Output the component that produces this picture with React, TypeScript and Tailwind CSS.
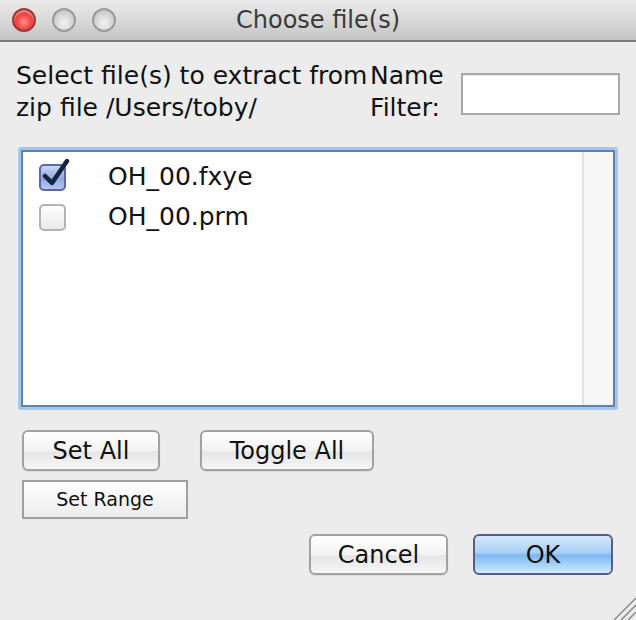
import React from "react";

const font = { fontFamily: '"DejaVu Sans", "Liberation Sans", sans-serif' };

const Light: React.FC<{ red?: boolean }> = ({ red }) => (
  <span
    className={
      red
        ? "block size-[24px] rounded-full border-2 border-[#9c3a3a] bg-[radial-gradient(circle_at_50%_60%,#ff8d8d_0%,#f24848_45%,#c01f1f_100%)] shadow-[inset_0_2px_2px_rgba(255,255,255,0.5)]"
        : "block size-[24px] rounded-full border-2 border-[#9a9a9a] bg-[radial-gradient(circle_at_50%_65%,#f4f4f4_0%,#d4d4d4_55%,#b4b4b4_100%)]"
    }
  />
);

const CheckBox: React.FC<{ checked?: boolean }> = ({ checked }) => (
  <span className="relative block size-[27px] shrink-0">
    <span
      className={
        checked
          ? "absolute inset-0 rounded-[5px] border-2 border-[#5a6aa0] bg-[linear-gradient(#c9d6f2,#8fa8e0_55%,#b4c7f0)]"
          : "absolute inset-0 rounded-[5px] border-2 border-[#b3b3b3] bg-[linear-gradient(#ffffff,#e9e9e9)]"
      }
    />
    {checked && (
      <svg
        className="absolute left-0 top-[-6px]"
        width="32"
        height="32"
        viewBox="0 0 32 32"
      >
        <path
          d="M6 18 L13 25 L28 3"
          fill="none"
          stroke="#15233d"
          strokeWidth="4.5"
          strokeLinecap="round"
          strokeLinejoin="round"
        />
      </svg>
    )}
  </span>
);

const Button: React.FC<{ label: string; className: string }> = ({
  label,
  className,
}) => (
  <button
    className={`flex items-center justify-center rounded-[6px] border-2 border-[#a2a2a2] bg-[linear-gradient(#ffffff,#f3f3f3_50%,#e6e6e6_55%,#f6f6f6)] text-[24px] text-[#111] shadow-[0_1px_1px_rgba(0,0,0,0.08)] ${className}`}
  >
    {label}
  </button>
);

export default function App() {
  const files = [
    { name: "OH_00.fxye", checked: true },
    { name: "OH_00.prm", checked: false },
  ];
  return (
    <div
      className="relative flex h-[620px] w-[636px] flex-col overflow-hidden bg-[#ececec] text-[#111]"
      style={font}
    >
      {/* title bar */}
      <div className="relative flex h-[42px] shrink-0 items-center border-b-2 border-[#7a7a7a] bg-[linear-gradient(#ebebeb,#d9d9d9_50%,#c4c4c4)]">
        <div className="flex gap-[16px] pl-[12px]">
          <Light red />
          <Light />
          <Light />
        </div>
        <span className="absolute inset-x-0 text-center text-[24px] text-[#3a3a3a]">
          Choose file(s)
        </span>
      </div>

      {/* header */}
      <div className="mt-[18px] flex items-start pl-[16px]">
        <div className="w-[354px] whitespace-nowrap text-[25px] leading-[32px]">
          Select file(s) to extract from
          <br />
          zip file /Users/toby/
        </div>
        <div className="w-[70px] text-right text-[25px] leading-[32px]">
          Name
          <br />
          Filter:
        </div>
        <div className="ml-[21px] mt-[13px] h-[42px] w-[159px] border-2 border-[#a8a8a8] bg-white shadow-[inset_0_1px_1px_rgba(0,0,0,0.1)]" />
      </div>

      {/* file list */}
      <div className="mx-[18px] mt-[23px] h-[263px] rounded-[3px] bg-[#a6c6ea] p-[3px]">
        <div className="flex h-full border-2 border-[#5d84ae] bg-white">
          <div className="flex flex-1 flex-col pt-[5px]">
            {files.map((f) => (
              <div
                key={f.name}
                className="flex h-[40px] items-center gap-[42px] pl-[16px]"
              >
                <CheckBox checked={f.checked} />
                <span className="text-[25px]">{f.name}</span>
              </div>
            ))}
          </div>
          <div className="w-[31px] border-l-2 border-[#e2e2e2] bg-[#f7f7f7]" />
        </div>
      </div>

      {/* action buttons */}
      <div className="mt-[20px] flex gap-[40px] pl-[22px]">
        <Button label="Set All" className="h-[41px] w-[138px]" />
        <Button label="Toggle All" className="h-[41px] w-[174px]" />
      </div>
      <div className="mt-[9px] pl-[22px]">
        <button className="flex h-[39px] w-[166px] items-center justify-center border-2 border-[#a0a0a0] bg-[linear-gradient(#ffffff,#ececec)] text-[19px] text-[#111]">
          Set Range
        </button>
      </div>

      <div className="mt-[15px] flex justify-end gap-[25px] pr-[23px]">
        <Button label="Cancel" className="h-[41px] w-[139px]" />
        <button className="flex h-[41px] w-[140px] items-center justify-center rounded-[6px] border-2 border-[#585d8c] bg-[linear-gradient(#d4e8fb,#a9d0f6_45%,#7fb8ef_52%,#a9d6f8_80%,#d2ecfd)] text-[24px] text-[#111]">
          OK
        </button>
      </div>

      {/* resize grip */}
      <svg
        className="absolute bottom-0 right-0"
        width="24"
        height="24"
        viewBox="0 0 24 24"
      >
        <path
          d="M2 24 L24 2 M9 24 L24 9 M16 24 L24 16"
          stroke="#8a8a8a"
          strokeWidth="1.5"
        />
      </svg>
    </div>
  );
}
